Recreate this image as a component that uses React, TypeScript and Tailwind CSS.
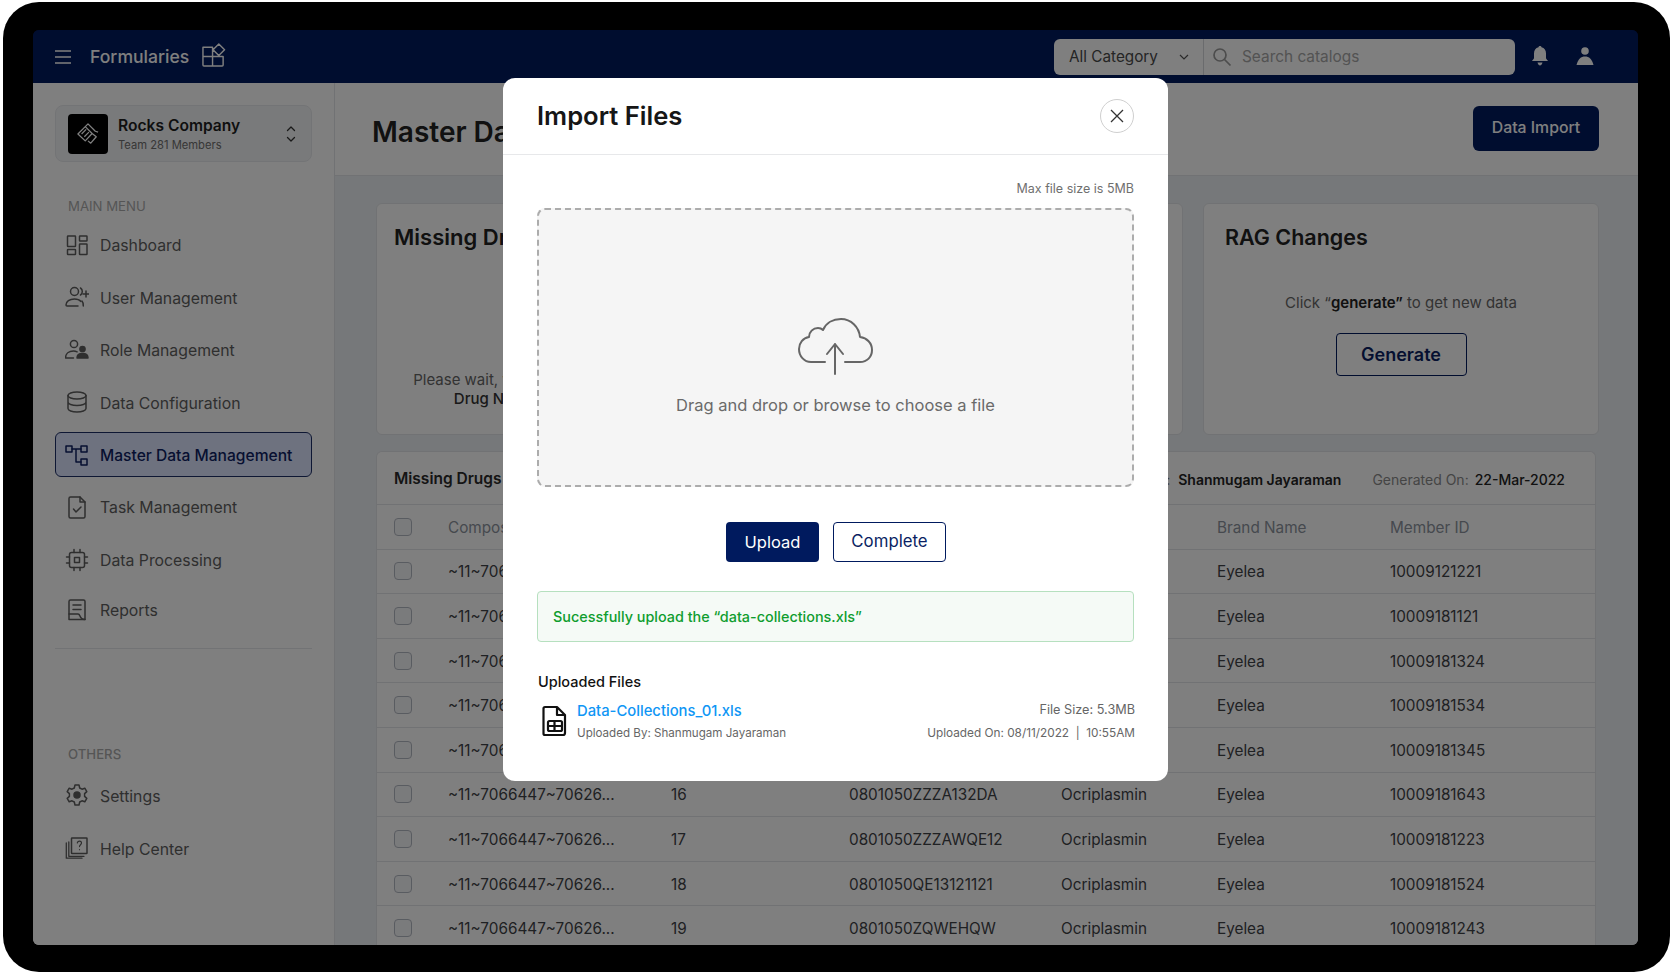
import React from "react";

function Ico({ children, size = 24, vb = "0 0 24 24" }: { children: React.ReactNode; size?: number; vb?: string }) {
  return (
    <svg width={size} height={size} viewBox={vb} fill="none" stroke="currentColor" strokeWidth={1.5} strokeLinecap="round" strokeLinejoin="round" className="shrink-0">
      {children}
    </svg>
  );
}

const icons: Record<string, React.ReactNode> = {
  dash: (
    <>
      <rect x="2.500" y="3" width="8" height="10.500" rx="0.500" />
      <rect x="14.500" y="3" width="7.500" height="5" rx="0.500" />
      <rect x="2.500" y="16.500" width="8" height="5" rx="0.500" />
      <rect x="14.500" y="11" width="7.500" height="10.500" rx="0.500" />
    </>
  ),
  user: (
    <>
      <circle cx="9.500" cy="6.500" r="4" />
      <path d="M15.500 3c1.300.8 1.800 2 1.800 3.500s-.5 2.700-1.800 3.500" />
      <path d="M13 21H2a1 1 0 0 1-1-1c0-3.500 3.500-6 8.500-6 2.500 0 5 .8 6.500 2.500" />
      <path d="M17 16c1 1 1.300 2.500 1.300 5" />
      <path d="M21 6v6M18 9h6" />
    </>
  ),
  role: (
    <>
      <circle cx="9" cy="6" r="3.600" />
      <path d="M0.500 20c0-4.500 3.600-7 8-7 1.400 0 2.600.3 3.600.8M0.500 20h8" />
      <circle cx="17.500" cy="11" r="2.600" fill="currentColor" />
      <path d="M12 20c0-3 2.400-4.600 5.500-4.600S23 17 23 20z" fill="currentColor" />
    </>
  ),
  db: (
    <>
      <ellipse cx="12" cy="5.500" rx="9" ry="3.500" />
      <path d="M3 5.500v13c0 2 4 3.500 9 3.500s9-1.500 9-3.500v-13M3 12c0 2 4 3.500 9 3.500s9-1.500 9-3.500" />
    </>
  ),
  master: (
    <>
      <rect x="1" y="3" width="6" height="6" />
      <rect x="16" y="3" width="6" height="6" />
      <rect x="16" y="16" width="6" height="6" />
      <path d="M7 6h9M11 6v13h5" />
    </>
  ),
  task: (
    <>
      <path d="M4 3.500a1.500 1.500 0 0 1 1.500-1.500H15l5 5v14.500a1.500 1.500 0 0 1-1.500 1.500h-13A1.500 1.500 0 0 1 4 21.500z" />
      <path d="M15 2v5h5M8.500 14l2.500 3 5-5" />
    </>
  ),
  cpu: (
    <>
      <rect x="4.500" y="4.500" width="15" height="15" rx="2" />
      <rect x="9.500" y="9.500" width="5" height="5" />
      <path d="M9 1.500v3M15 1.500v3M9 19.500v3M15 19.500v3M1.500 9h3M1.500 15h3M19.500 9h3M19.500 15h3" />
    </>
  ),
  report: (
    <>
      <path d="M20 15V3.500A1.500 1.500 0 0 0 18.500 2h-13A1.500 1.500 0 0 0 4 3.500v18h16z" />
      <path d="M8 7h8M8 11.500h8M4 16h9c1 0 1.500.8 2 2 .5 1.500 1.500 3.500 5 3.500" />
    </>
  ),
  gear: (
    <>
      <path d="M10 2h4l.7 3 2.300 1.200 2.800-1 2 3.400-2.200 2v2.800l2.200 2-2 3.400-2.800-1-2.300 1.200-.7 3h-4l-.7-3L7 17.800l-2.800 1-2-3.400 2.200-2v-2.800l-2.200-2 2-3.400 2.800 1L9.300 5z" />
      <circle cx="12" cy="12" r="3" fill="currentColor" />
    </>
  ),
  help: (
    <>
      <rect x="6.500" y="2" width="15.500" height="15.500" rx="0.500" />
      <path d="M3.800 6v14.300H19M1.300 7v15.200H17" strokeWidth="1.300" />
      <path d="M12.300 7c.3-1.300 1.200-1.800 2.200-1.800 1.200 0 2 .8 2 1.900 0 1.600-2 1.800-2 3.500M14.500 13.500v.2" strokeWidth="1.200" />
    </>
  ),
};

function NavItem({ icon, label, active, className = "", labelClass = "mt-[2px]" }: { icon: string; label: string; active?: boolean; className?: string; labelClass?: string }) {
  return (
    <div
      className={
        (active
          ? "h-[45px] flex items-center gap-[11px] pl-[9px] rounded-md border-[1.500px] border-[#1d2f66] bg-[#dde4ff] text-[#0e1f63] font-medium text-[15.600px] "
          : "h-[45px] flex items-center gap-[11px] pl-[10px] text-[#5e5e5e] text-[15.800px] ") + className
      }
    >
      <Ico>{icons[icon]}</Ico>
      <span className={labelClass}>{label}</span>
    </div>
  );
}

function Sidebar() {
  return (
    <aside className="w-[302px] shrink-0 bg-white border-r border-[#e2e4e8] px-[22px] pt-[22px]">
      <div className="h-[57px] rounded-lg border border-[#e6e8ec] bg-[#f3f4f6] flex items-center pl-[12px] pr-[15px]">
        <div className="w-10 h-10 rounded bg-black flex items-center justify-center shrink-0">
          <svg width="22" height="22" viewBox="0 0 24 24" fill="none" stroke="#fff" strokeWidth="1.400" strokeLinejoin="round">
            <path d="M1 12L9 4l7.500 7.500L9 19.500zM5 12l5-5M8 15l5-5M9 4l3-3 8 8 3 1M16.500 11.500L21 15l-6 7-3-2.500" />
          </svg>
        </div>
        <div className="ml-[10px] flex-1">
          <div className="text-[15.600px] font-semibold leading-[20px] mt-[2px] text-[#1f1f1f]">Rocks Company</div>
          <div className="text-[11.200px] leading-[16px] mt-[1px] text-[#6e6e6e]">Team 281 Members</div>
        </div>
        <svg width="10" height="18" viewBox="0 0 10 18" fill="none" stroke="#333" strokeWidth="1.300" strokeLinecap="round" strokeLinejoin="round">
          <path d="M1.500 5.500L5 2l3.500 3.500M1.500 12.500L5 16l3.500-3.500" />
        </svg>
      </div>
      <div className="mt-[34px] mb-[6px] pl-[13px] h-5 leading-5 text-[13.200px] text-[#ababab]">MAIN MENU</div>
      <div className="flex flex-col gap-[7.500px]">
        <NavItem icon="dash" label="Dashboard" />
        <NavItem icon="user" label="User Management" labelClass="mt-[3px]" />
        <NavItem icon="role" label="Role Management" />
        <NavItem icon="db" label="Data Configuration" labelClass="mt-[3px]" />
        <NavItem icon="master" label="Master Data Management" labelClass="mt-[2px]" active />
        <NavItem icon="task" label="Task Management" />
        <NavItem icon="cpu" label="Data Processing" />
        <NavItem icon="report" label="Reports" className="-mt-[2px]" />
      </div>
      <div className="mt-[15px] border-t border-[#e4e6ea]" />
      <div className="mt-[95px] pl-[13px] h-5 leading-5 text-[13.200px] font-medium text-[#ababab]">OTHERS</div>
      <div className="mt-[9px] flex flex-col gap-2">
        <NavItem icon="gear" label="Settings" labelClass="mt-[3px]" />
        <NavItem icon="help" label="Help Center" labelClass="mt-[3px]" />
      </div>
    </aside>
  );
}

function TopBar() {
  return (
    <header className="h-[53px] shrink-0 bg-[#001a5e] flex items-center text-white pl-[22px] pr-[44px]">
      <svg width="16" height="14" viewBox="0 0 16 14" fill="none" stroke="#fff" strokeWidth="1.500">
        <path d="M0 1h16M0 7h16M0 13h16" />
      </svg>
      <span className="ml-[19px] mt-[2px] text-[17.600px] font-medium">Formularies</span>
      <svg width="24" height="24" viewBox="0 0 25 25" fill="none" stroke="#fff" strokeWidth="1.500" className="ml-[13px] -mt-[3px]" strokeLinejoin="round">
        <path d="M1 4.500h10v9.500H1zM1 14h10v10H2a1 1 0 0 1-1-1zM11 14h11v9a1 1 0 0 1-1 1H11zM17.500 1l6 6-6 6-6-6z" />
      </svg>
      <div className="ml-auto w-[461px] h-[36px] rounded-md bg-white flex items-center mr-[16px]">
        <div className="w-[150px] h-full border-r border-[#d5d7da] flex items-center pl-[15px] text-[15.300px] text-[#4a4a4a]">
          <span className="mt-[2px]">All Category</span>
          <svg width="10" height="6" viewBox="0 0 10 6" fill="none" stroke="#555" strokeWidth="1.200" className="ml-[21px]">
            <path d="M1 1l4 4 4-4" />
          </svg>
        </div>
        <svg width="20" height="20" viewBox="0 0 20 20" fill="none" stroke="#9a9a9a" strokeWidth="1.700" className="ml-2">
          <circle cx="8" cy="8" r="6" />
          <path d="M12.500 12.500L18.500 18.500" />
        </svg>
        <span className="ml-[10px] text-[15.400px] text-[#a6a6a6]">Search catalogs</span>
      </div>
      <svg width="18" height="20" viewBox="0 0 18 20" fill="#fff" className="-mt-[1px]">
        <path d="M9 0c-1 0-1.500.7-1.500 1.300C4.500 2 3 4.500 3 7.500V12c0 1.200-1.500 2-2 3h16c-.5-1-2-1.800-2-3V7.500c0-3-1.500-5.500-4.500-6.200C10.500.7 10 0 9 0zM6.500 16.500C7 18.500 8 19.500 9 19.500s2-1 2.500-3z" />
      </svg>
      <svg width="18" height="18" viewBox="0 0 18 18" fill="#fff" className="ml-[27px] -mt-[1px]">
        <circle cx="9" cy="4" r="3.800" />
        <path d="M9 9.500c-4 0-7 2.500-8.500 8.500h17C16 12 13 9.500 9 9.500z" />
      </svg>
    </header>
  );
}

const rows = [
  ["11", "0801050ZZZA121AB", "10009121221"],
  ["12", "0801050ZZZA122BC", "10009181121"],
  ["13", "0801050ZZZA123CD", "10009181324"],
  ["14", "0801050ZZZA124DE", "10009181534"],
  ["15", "0801050ZZZA125EF", "10009181345"],
  ["16", "0801050ZZZA132DA", "10009181643"],
  ["17", "0801050ZZZAWQE12", "10009181223"],
  ["18", "0801050QE13121121", "10009181524"],
  ["19", "0801050ZQWEHQW", "10009181243"],
];

function Check() {
  return <div className="w-[18px] h-[18px] rounded-[4px] border-[1.500px] border-[#b3b9c2] bg-[#f5f6f8] shrink-0" />;
}

function Row({ cells, head }: { cells: string[]; head?: boolean }) {
  return (
    <div className={"h-[44.600px] shrink-0 flex items-center border-t border-[#e2e4e8] pl-[17px] text-[15.300px] " + (head ? "text-[#8c939d]" : "text-[#3f4246]")}>
      <Check />
      <span className="ml-[36px] mt-[3px] w-[223px] whitespace-nowrap">{cells[0]}</span>
      <span className="mt-[3px] w-[178px] whitespace-nowrap">{cells[1]}</span>
      <span className="mt-[3px] w-[212px] whitespace-nowrap">{cells[2]}</span>
      <span className="mt-[3px] w-[156px] whitespace-nowrap">{cells[3]}</span>
      <span className="mt-[3px] w-[173px] whitespace-nowrap">{cells[4]}</span>
      <span className="mt-[3px] whitespace-nowrap">{cells[5]}</span>
    </div>
  );
}

function Main() {
  return (
    <main className="flex-1 min-w-0 bg-[#ecf0f4] flex flex-col">
      <div className="h-[93px] shrink-0 bg-white border-b border-[#e2e4e8] flex items-center justify-between pl-[37px] pr-[39px]">
        <h1 className="text-[28px] font-semibold text-[#222] whitespace-nowrap mt-[5px]">Master Data Management</h1>
        <button className="w-[126px] h-[45px] rounded-md bg-[#001a5e] text-white text-[15.800px] font-medium -mt-[2px]">Data Import</button>
      </div>
      <div className="pl-[41px] pr-[39px] pt-[27px]">
        <div className="grid grid-cols-[1fr_1fr_396px] gap-[20px]">
          <section className="h-[232px] bg-white rounded-md border border-[#e2e4e8] pt-[17px] text-center">
            <h2 className="text-[22px] leading-8 font-semibold text-[#222] text-left pl-[17px]">Missing Drugs</h2>
            <p className="mt-[117px] text-[15px] leading-[19px] text-[#666] whitespace-nowrap">Please wait, while we are generating the new</p>
            <p className="text-[15px] leading-[19px] font-medium text-[#333] whitespace-nowrap">Drug Name with the latest report.</p>
          </section>
          <section className="h-[232px] bg-white rounded-md border border-[#e2e4e8]" />
          <section className="h-[232px] bg-white rounded-md border border-[#e2e4e8] pt-[17px]">
            <h2 className="text-[21.500px] leading-8 font-semibold text-[#222] pl-[21px]">RAG Changes</h2>
            <p className="mt-[38px] text-center text-[15px] leading-6 text-[#666]">
              Click “<b className="font-semibold text-[#222]">generate”</b> to get new data
            </p>
            <div className="flex justify-center mt-[18px]">
              <button className="w-[131px] h-[43px] rounded border-[1.500px] border-[#001a5e] text-[#0a1f63] text-lg font-semibold">Generate</button>
            </div>
          </section>
        </div>
        <section className="mt-[16px] mr-[3px] bg-white rounded-t-md border border-b-0 border-[#e2e4e8] h-[600px]">
          <div className="h-[52px] flex items-center pl-[17px] pr-[30px] text-[14px]">
            <span className="mt-[2px] text-[15.500px] font-semibold text-[#2a2a2a]">Missing Drugs</span>
            <span className="ml-auto mt-[2px] text-[14px] text-[#777]">Generated By:</span>
            <span className="ml-[8px] mt-[2px] text-[14px] font-semibold text-[#222]">Shanmugam Jayaraman</span>
            <span className="ml-[31px] mt-[2px] text-[#8a8a8a]">Generated On:</span>
            <span className="ml-[6px] mt-[2px] font-medium text-[#222]">22-Mar-2022</span>
          </div>
          <Row head cells={["Composition", "Qty", "BNF Code", "Drug Name", "Brand Name", "Member ID"]} />
          {rows.map((r) => (
            <Row key={r[2]} cells={["~11~7066447~70626...", r[0], r[1], "Ocriplasmin", "Eyelea", r[2]]} />
          ))}
        </section>
      </div>
    </main>
  );
}

function Modal() {
  return (
    <div className="absolute left-[470px] top-[48px] w-[665px] h-[703px] bg-white rounded-xl">
      <div className="h-[77px] border-b border-[#e7e8ea] flex items-center justify-between pl-[34px] pr-[34px]">
        <h2 className="mt-[1px] text-[25.600px] font-semibold text-[#161616]">Import Files</h2>
        <div className="w-[34px] h-[34px] rounded-full border border-[#cfcfcf] flex items-center justify-center">
          <svg width="14" height="14" viewBox="0 0 14 14" fill="none" stroke="#333" strokeWidth="1.300">
            <path d="M1 1l12 12M13 1L1 13" />
          </svg>
        </div>
      </div>
      <div className="px-[34px]">
        <div className="pt-[25px] h-[42px] text-right text-[12.500px] leading-[18px] text-[#6f6f6f]">Max file size is 5MB</div>
        <div className="mt-[11px] h-[279px] rounded-lg border-2 border-dashed border-[#acacac] bg-[#f5f5f5] flex flex-col items-center pt-[108px]">
          <svg width="76" height="58" viewBox="0 0 76 58" fill="none" stroke="#666" strokeWidth="2" strokeLinecap="round" strokeLinejoin="round">
            <path d="M27 44H13C6 44 1 38 1 31C1 25 5 20 11 19C11 14 15 10 20 10C22 10 24 11 25 12C28 5 35 1 43 1C53 1 61 9 62 19C69 20 74 25 74 32C74 39 69 44 62 44H47" />
            <path d="M37 56V26M29 36L37 26L45 36" />
          </svg>
          <p className="mt-[19px] text-[16.500px] leading-5 text-[#6a6a6a]">Drag and drop or browse to choose a file</p>
        </div>
        <div className="mt-[35px] flex justify-center gap-[14px] pl-[1px]">
          <button className="w-[93px] h-[40px] rounded bg-[#001a5e] text-white text-[16.500px]">Upload</button>
          <button className="w-[113px] h-[40px] rounded border-[1.500px] border-[#001a5e] text-[#0a1f63] text-[16.800px]">Complete</button>
        </div>
        <div className="mt-[29px] h-[51px] rounded border border-[#b6e0bf] bg-[#f5faf6] flex items-center pl-[15px] text-[14.400px] font-medium text-[#0f9d2e]">
          Sucessfully upload the “data-collections.xls”
        </div>
        <div className="mt-[30px] pl-[1px] text-[14.500px] leading-5 font-medium text-[#111]">Uploaded Files</div>
        <div className="mt-[9px] flex">
          <svg width="26" height="32" viewBox="0 0 26 32" fill="none" stroke="#111" strokeWidth="2.200" strokeLinejoin="round" className="ml-[5px] mt-[4px] shrink-0">
            <path d="M3 2h12l8 8v18a2 2 0 0 1-2 2H3a1.500 1.500 0 0 1-1.500-1.500v-25A1.500 1.500 0 0 1 3 2zM15 2v8h8" />
            <rect x="6" y="16" width="14" height="10" rx="1.500" />
            <path d="M6 21h14M12.500 16v10" />
          </svg>
          <div className="ml-[9px]">
            <div className="text-[14.800px] leading-5 font-medium text-[#0f96f5]">Data-Collections_01.xls</div>
            <div className="mt-[4px] text-[11.600px] leading-4 text-[#666]">Uploaded By: Shanmugam Jayaraman</div>
          </div>
          <div className="ml-auto text-right -mr-[1px]">
            <div className="text-[12.700px] leading-5 -mt-[1px] text-[#666]">File Size: 5.3MB</div>
            <div className="mt-[5px] text-[11.800px] leading-4 text-[#666]">Uploaded On: 08/11/2022&nbsp; |&nbsp; 10:55AM</div>
          </div>
        </div>
      </div>
    </div>
  );
}

export default function App() {
  return (
    <div className="w-[1671px] h-[975px] bg-white pl-[3px] pt-[2px] overflow-hidden" style={{ fontFamily: "Inter, 'Liberation Sans', sans-serif" }}>
      <div className="w-[1667px] h-[970px] rounded-[36px] bg-black pl-[30px] pt-[28px]">
        <div className="relative w-[1605px] h-[915px] rounded-md overflow-hidden flex flex-col">
          <TopBar />
          <div className="flex flex-1 min-h-0">
            <Sidebar />
            <Main />
          </div>
          <div className="absolute inset-0 bg-black/50">
            <Modal />
          </div>
        </div>
      </div>
    </div>
  );
}
